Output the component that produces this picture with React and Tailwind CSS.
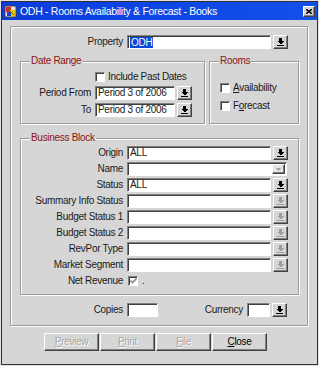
import React from 'react';

const raised = 'border border-t-white border-l-white border-b-[#404040] border-r-[#404040] shadow-[inset_-1px_-1px_0_#808080]';
const sunken = 'border border-t-[#808080] border-l-[#808080] border-b-white border-r-white shadow-[inset_1px_1px_0_#404040]';
const etched = 'relative border border-[#9c9c9c] shadow-[inset_1px_1px_0_#fff,1px_1px_0_#fff]';

function Arrow({ dim }) {
  return (
    <svg width="7" height="8" viewBox="0 0 7 8" shapeRendering="crispEdges" className={dim ? 'text-[#a0a0a0]' : 'text-black'}>
      <rect x="2" y="0" width="3" height="3" fill="currentColor" />
      <polygon points="0,3 7,3 3.5,6.5" fill="currentColor" />
      <rect x="0" y="7" width="7" height="1" fill="currentColor" />
    </svg>
  );
}

function DropBtn({ dim }) {
  return (
    <div className={`${raised} bg-[#d6d6d6] w-[15px] h-[14px] ml-[2px] flex items-center justify-center shrink-0`}>
      <Arrow dim={dim} />
    </div>
  );
}

function Field({ w, children }) {
  return (
    <div className={`${sunken} bg-white h-[14px] flex items-center pl-[2px] shrink-0 ${w}`}>
      {children}
    </div>
  );
}

function Check({ checked }) {
  return (
    <div className={`${sunken} bg-white w-[10px] h-[10px] shrink-0 flex items-center justify-center`}>
      {checked && (
        <svg width="7" height="6" viewBox="0 0 7 6">
          <path d="M0.5 2.5 L2.5 4.5 L6.5 0.5" stroke="#8a8a8a" strokeWidth="1.6" fill="none" />
        </svg>
      )}
    </div>
  );
}

function Legend({ children }) {
  return (
    <span className="absolute -top-[7px] left-[9px] px-[1px] bg-[#d6d6d6] text-[#8b1414] leading-[12px]">{children}</span>
  );
}

function Row({ label, value, dim, combo }) {
  return (
    <div className="flex items-center h-[14px]">
      <div className="w-[102px] mr-[4px] text-right">{label}</div>
      {combo ? (
        <div className={`${sunken} bg-white h-[14px] w-[160px] flex items-center justify-end pr-[1px]`}>
          <div className={`${raised} bg-[#e4e4e4] w-[13px] h-[10px] flex items-center justify-center`}>
            <svg width="5" height="3" viewBox="0 0 5 3"><polygon points="0,0 5,0 2.5,3" fill="#a0a0a0" /></svg>
          </div>
        </div>
      ) : (
        <>
          <Field w="w-[144px]">{value}</Field>
          <DropBtn dim={dim} />
        </>
      )}
    </div>
  );
}

function Btn({ children, dim }) {
  return (
    <div className={`${raised} w-[55px] h-[18px] flex items-center justify-center ${dim ? 'text-[#a6a6a6] [text-shadow:1px_1px_0_#fff]' : 'text-black'}`}>
      {children}
    </div>
  );
}

export default function App() {
  return (
    <div className="w-[319px] h-[366px] p-px bg-[#e2e2e2] font-['Liberation_Sans',Arial,sans-serif] text-[10px] leading-[12px] tracking-[-0.3px] text-[#1a1a1a]">
      <div className="w-full h-full border border-[#303030] bg-[#d6d6d6] flex flex-col">
        <div className="h-[18px] bg-gradient-to-r from-[#0a3cdc] to-[#1450ea] flex items-center pl-[2px] pr-[2px]">
          <svg width="13" height="13" viewBox="0 0 13 13" className="shrink-0">
            <rect x="1" y="1" width="11" height="11" fill="#e8e8e8" stroke="#404040" strokeWidth="1" />
            <rect x="2" y="2" width="5" height="5" fill="#e02020" />
            <rect x="6" y="5" width="5" height="6" fill="#f0c000" />
            <rect x="3" y="7" width="4" height="4" fill="#2040c0" />
            <path d="M3 3 L10 10" stroke="#20a020" strokeWidth="1" />
          </svg>
          <span className="ml-[3px] text-white text-[10.5px] leading-none">ODH - Rooms Availability &amp; Forecast - Books</span>
          <div className={`${raised} ml-auto w-[12px] h-[11px] bg-[#d6d6d6] flex items-center justify-center`}>
            <svg width="6" height="5" viewBox="0 0 6 5"><path d="M0 0 L6 5 M6 0 L0 5" stroke="#000" strokeWidth="1.4" /></svg>
          </div>
        </div>

        <div className={`${etched} mt-[6px] ml-[8px] w-[298px] h-[300px] flex flex-col`}>
          <div className="flex items-center h-[14px] mt-[8px]">
            <div className="w-[112px] mr-[4px] text-right">Property</div>
            <Field w="w-[144px]"><span className="bg-[#0a46d8] text-white px-px leading-[11px]">ODH</span></Field>
            <DropBtn />
          </div>

          <div className="flex mt-[12px] ml-[9px] gap-[4px]">
            <div className={`${etched} w-[185px] h-[63px] flex flex-col`}>
              <Legend>Date Range</Legend>
              <div className="flex items-center mt-[9px] pl-[74px]">
                <Check />
                <span className="ml-[3px]">Include Past Dates</span>
              </div>
              <div className="flex items-center h-[14px] mt-[3px]">
                <div className="w-[70px] mr-[4px] text-right">Period From</div>
                <Field w="w-[80px]">Period 3 of 2006</Field>
                <DropBtn />
              </div>
              <div className="flex items-center h-[14px] mt-[3px]">
                <div className="w-[70px] mr-[4px] text-right">To</div>
                <Field w="w-[80px]">Period 3 of 2006</Field>
                <DropBtn />
              </div>
            </div>
            <div className={`${etched} w-[90px] h-[63px] flex flex-col pl-[10px]`}>
              <Legend>Rooms</Legend>
              <div className="flex items-center mt-[20px]">
                <Check />
                <span className="ml-[3px]"><u>A</u>vailability</span>
              </div>
              <div className="flex items-center mt-[6px]">
                <Check />
                <span className="ml-[3px]">F<u>o</u>recast</span>
              </div>
            </div>
          </div>

          <div className={`${etched} mt-[14px] ml-[9px] w-[279px] h-[157px] flex flex-col gap-[2px] pt-[7px]`}>
            <Legend>Business Block</Legend>
            <Row label="Origin" value="ALL" />
            <Row label="Name" combo />
            <Row label="Status" value="ALL" />
            <Row label="Summary Info Status" dim />
            <Row label="Budget Status 1" dim />
            <Row label="Budget Status 2" dim />
            <Row label="RevPor Type" dim />
            <Row label="Market Segment" dim />
            <div className="flex items-center mt-[1px]">
              <div className="w-[102px] mr-[5px] text-right">Net Revenue</div>
              <Check checked />
              <span className="ml-[4px]">.</span>
            </div>
          </div>

          <div className="flex items-center h-[14px] mt-[8px]">
            <div className="w-[112px] mr-[4px] text-right">Copies</div>
            <Field w="w-[31px]" />
            <div className="w-[85px] mr-[4px] text-right">Currency</div>
            <Field w="w-[23px]" />
            <DropBtn />
          </div>
        </div>

        <div className="flex gap-[1px] mt-[7px] ml-[42px]">
          <Btn dim><u>P</u>review</Btn>
          <Btn dim><u>P</u>rint</Btn>
          <Btn dim><u>F</u>ile</Btn>
          <Btn><u>C</u>lose</Btn>
        </div>
      </div>
    </div>
  );
}
